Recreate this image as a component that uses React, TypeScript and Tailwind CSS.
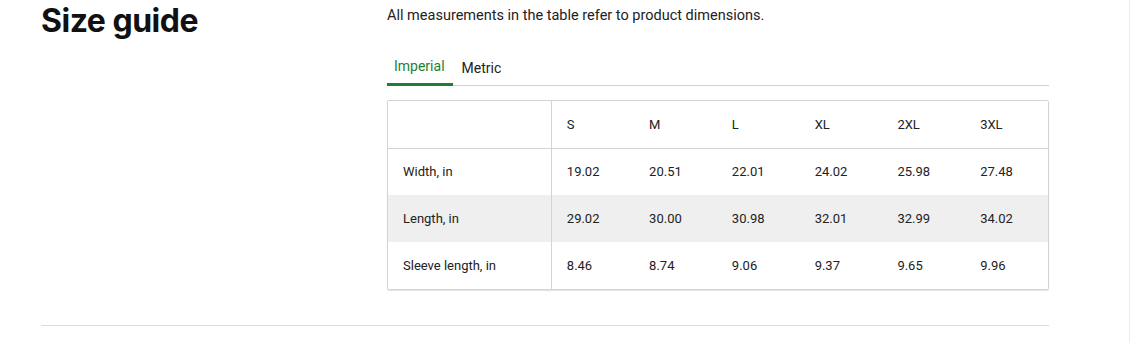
const SIZES = ['S', 'M', 'L', 'XL', '2XL', '3XL']

const ROWS = [
  { label: 'Width, in', values: ['19.02', '20.51', '22.01', '24.02', '25.98', '27.48'] },
  { label: 'Length, in', values: ['29.02', '30.00', '30.98', '32.01', '32.99', '34.02'], shaded: true },
  { label: 'Sleeve length, in', values: ['8.46', '8.74', '9.06', '9.37', '9.65', '9.96'] },
]

export default function App() {
  return (
    <div className="h-[343px] w-[1131px] overflow-hidden bg-white font-['Roboto',sans-serif] text-[#222]">
      <div className="flex border-r border-[#ececec] w-[1130px] h-full flex-col">
        <div className="flex pl-[41px]">
          <h2 className="w-[346px] pt-[1px] font-['Inter',sans-serif] text-[32px] font-bold leading-[40px] tracking-[-0.5px] text-[#111]">
            Size guide
          </h2>

          <div className="w-[662px]">
            <p className="pt-[7px] text-[14.5px] leading-[18px] text-[#222]">
              All measurements in the table refer to product dimensions.
            </p>

            {/* Tabs */}
            <div className="mt-[32px] flex border-b border-[#cfcfcf]">
              <button className="-mb-px border-b-[3px] border-[#1e7f34] pl-[7px] pr-[8px] pb-[8px] text-[14px] leading-[18px] text-[#1e7f34]">
                Imperial
              </button>
              <button className="-mb-px pl-[9px] pr-[8px] pb-[8px] text-[14px] leading-[18px] text-[#222]">
                Metric
              </button>
            </div>

            {/* Table */}
            <div className="mt-[14px] overflow-hidden rounded-[2px] border border-[#d4d4d4] shadow-[0_1px_1px_rgba(0,0,0,0.12)]">
              <table className="w-full border-collapse text-[13px] text-[#222]">
                <thead>
                  <tr className="h-[47px] border-b border-[#d4d4d4]">
                    <th className="w-[164px] border-r border-[#d4d4d4]" />
                    {SIZES.map((s) => (
                      <th key={s} className="w-[83px] pl-[15px] text-left font-normal">
                        {s}
                      </th>
                    ))}
                  </tr>
                </thead>
                <tbody>
                  {ROWS.map((row) => (
                    <tr key={row.label} className={row.shaded ? 'h-[47px] bg-[#efefef]' : 'h-[47px]'}>
                      <td className="border-r border-[#d4d4d4] pl-[15px]">{row.label}</td>
                      {row.values.map((v, i) => (
                        <td key={i} className="pl-[15px]">
                          {v}
                        </td>
                      ))}
                    </tr>
                  ))}
                </tbody>
              </table>
            </div>
          </div>
        </div>

        <div className="ml-[41px] mt-[35px] w-[1008px] border-t border-[#dcdcdc]" />
      </div>
    </div>
  )
}
